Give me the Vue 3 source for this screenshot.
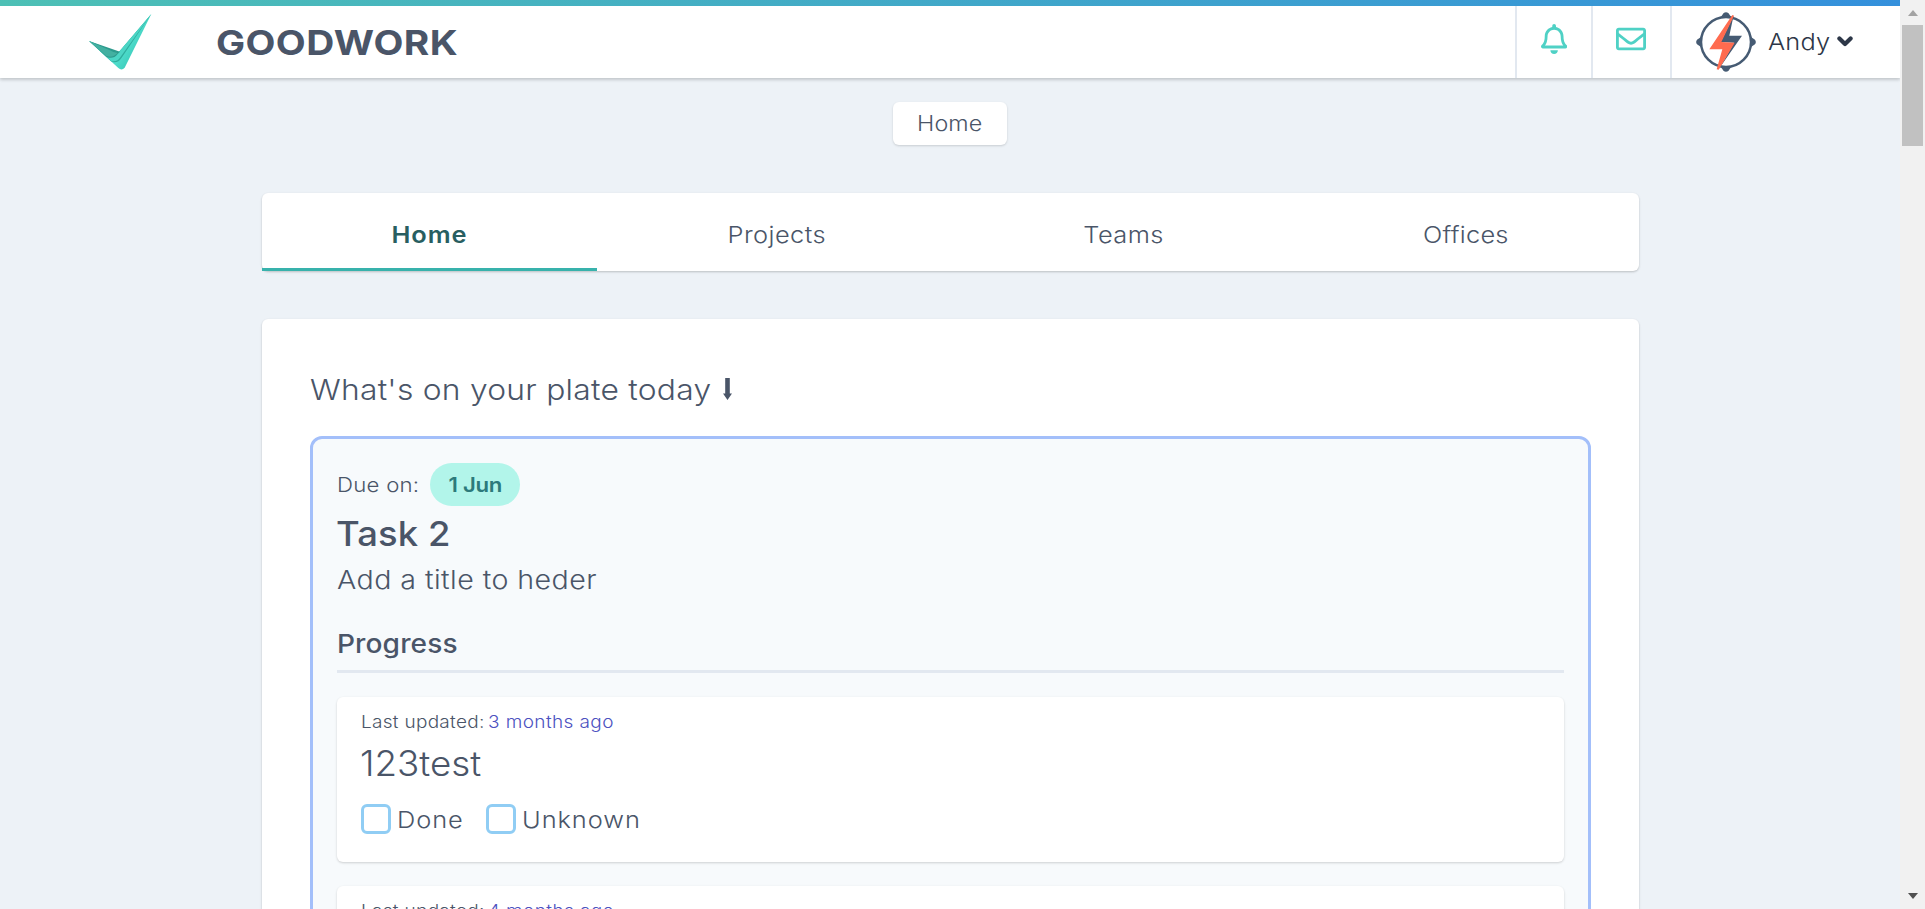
<script setup>
const tabs = [
  { label: 'Home', cls: 'tab-home' },
  { label: 'Projects', cls: 'tab-projects' },
  { label: 'Teams', cls: 'tab-teams' },
  { label: 'Offices', cls: 'tab-offices' },
]
const updates = [
  { age: '3 months ago', title: '123test', options: ['Done', 'Unknown'] },
  { age: '4 months ago' },
]
</script>

<template>
  <div class="screen">
    <div class="page">
      <header class="topbar">
        <svg class="logo" viewBox="0 0 240 225">
          <defs>
            <linearGradient id="arm" x1="0" y1="0.2" x2="1" y2="0.8">
              <stop offset="0.35" stop-color="#3fd3c2" />
              <stop offset="0.62" stop-color="#4fdccb" />
              <stop offset="1" stop-color="#25b9a9" />
            </linearGradient>
          </defs>
          <path d="M27 108 L115 189 Q125 198 134 188 L214 27 L116 143 Z" fill="url(#arm)" />
          <path d="M60 138 L93 169 Q112 178 125 158 L214 27 L114 144 Z" fill="#2fae9f" />
          <path d="M60 138 L92 167 Q110 174 122 155 L214 27 L114 144 Z" fill="#4cd5c5" />
          <path d="M27 108 L80 156 Q100 164 113 147 L120 140 Z" fill="#2d9a8d" />
          <path d="M27 108 L79 153 Q98 160 113 144 Q100 142 88 135 Z" fill="#43b0a1" />
        </svg>
        <h1 class="brand"><span class="t">GOODWORK</span></h1>
        <div class="tools">
          <button class="tool bell" aria-label="Notifications">
            <svg viewBox="0 0 448 512"><path d="M439.39 362.29c-19.32-20.76-55.47-51.99-55.47-154.29 0-77.7-54.48-139.9-127.94-155.16V32c0-17.67-14.32-32-31.98-32s-31.98 14.33-31.98 32v20.84C118.56 68.1 64.08 130.3 64.08 208c0 102.3-36.15 133.53-55.47 154.29-6 6.45-8.66 14.16-8.61 21.71.11 16.4 12.98 32 32.1 32h383.8c19.12 0 32-15.6 32.1-32 .05-7.55-2.61-15.27-8.61-21.71zM67.53 368c21.22-27.97 44.42-74.33 44.53-159.42 0-.2-.06-.38-.06-.58 0-61.86 50.14-112 112-112s112 50.14 112 112c0 .2-.06.38-.06.58.11 85.1 23.31 131.46 44.53 159.42H67.53zM224 512c35.32 0 63.97-28.65 63.97-64H160.03c0 35.35 28.65 64 63.97 64z" /></svg>
          </button>
          <button class="tool mail" aria-label="Messages">
            <svg viewBox="0 0 512 512"><path d="M464 64H48C21.49 64 0 85.49 0 112v288c0 26.51 21.49 48 48 48h416c26.51 0 48-21.49 48-48V112c0-26.51-21.49-48-48-48zm0 48v40.805c-22.422 18.259-58.168 46.651-134.587 106.49-16.841 13.247-50.201 45.072-73.413 44.701-23.208.375-56.579-31.459-73.413-44.701C106.18 199.465 70.425 171.067 48 152.805V112h416zM48 400V214.398c22.914 18.251 55.409 43.862 104.938 82.646 21.857 17.205 60.134 55.186 103.062 54.955 42.717.231 80.509-37.199 103.053-54.947 49.528-38.783 82.032-64.401 104.947-82.653V400H48z" /></svg>
          </button>
          <div class="account">
            <svg class="avatar" viewBox="18 20 180 180">
              <circle cx="108" cy="110" r="75" fill="#fff" stroke="#465b73" stroke-width="7.5" />
              <path d="M92 36 L101 23 Q108 18 115 23 L124 36 Z M92 184 L101 197 Q108 202 115 197 L124 184 Z M34 94 L21 103 Q16 110 21 117 L34 126 Z M182 94 L195 103 Q200 110 195 117 L182 126 Z" fill="#465b73" />
              <path d="M131 30 L118 91 L156 91 L86 192 L132 112 L92 110 Z" fill="#465b73" />
              <path d="M127 29 L132 31 L94 110 L134 112 L86 193 L80 192 L97 132 L58 132 Z" fill="#ff6b4f" />
            </svg>
            <span class="user t">Andy</span>
            <svg class="chev" viewBox="0 0 16 11"><path d="M2.4 2.4 L8 8 L13.6 2.4" /></svg>
          </div>
        </div>
      </header>

      <nav class="crumbs"><a class="crumb"><span class="t">Home</span></a></nav>

      <nav class="tabs">
        <a v-for="tab in tabs" :key="tab.label" class="tab" :class="tab.cls"><span class="t">{{ tab.label }}</span></a>
      </nav>

      <main class="card">
        <h2 class="heading">
          <span class="t heading-text">What's on your plate today</span>
          <svg class="down" viewBox="0 0 9 22"><path d="M2.2 0 H6.8 V15.5 H9 L4.5 22 L0 15.5 H2.2 Z" /></svg>
        </h2>
        <section class="task">
          <div class="due"><span class="due-label t">Due on:</span><span class="pill"><span class="t">1 Jun</span></span></div>
          <h3 class="task-title"><span class="t">Task 2</span></h3>
          <p class="task-desc"><span class="t">Add a title to heder</span></p>
          <h4 class="progress"><span class="t">Progress</span></h4>
          <article v-for="item in updates" :key="item.age" class="update">
            <p class="updated"><span class="t updated-label">Last updated:</span><span class="age t">{{ item.age }}</span></p>
            <p v-if="item.title" class="update-title"><span class="t">{{ item.title }}</span></p>
            <div v-if="item.options" class="options">
              <label v-for="option in item.options" :key="option" class="option"><i class="box"></i><span class="t">{{ option }}</span></label>
            </div>
          </article>
        </section>
      </main>
    </div>
    <div class="scrollbar">
      <i class="arrow up"></i>
      <i class="thumb"></i>
      <i class="arrow dn"></i>
    </div>
  </div>
</template>

<style>
html, body { overflow: hidden; background: #edf2f7; }
</style>

<style scoped>
* { box-sizing: border-box; margin: 0; }
.screen { display: flex; width: 1925px; height: 909px; overflow: hidden; font-family: Inter, "Open Sans", sans-serif; font-weight: 300; color: #4a5568; background: #edf2f7; }
/* Slightly extended letterforms for the interface face */
.t { display: inline-block; white-space: nowrap; transform: scaleX(1.1); transform-origin: left; }
.page { width: 1900px; height: 909px; overflow: hidden; }
.topbar { display: flex; height: 78px; align-items: flex-start; border-top: 6px solid; border-image: linear-gradient(to right, #4dc0b5, #3490dc) 1; background: #fff; box-shadow: 0 1px 4px rgba(0,0,0,.12), 0 2px 3px rgba(0,0,0,.1); }
.logo { width: 80px; height: 75px; margin: -1px 0 0 80px; flex: none; }
.brand { margin-left: 56px; font-size: 34.7px; font-weight: 700; line-height: 72px; letter-spacing: .35px; }
.brand .t { transform: scaleX(1.12); }
.tools { display: flex; margin-left: auto; height: 72px; }
.tool { border: 0; border-left: 2px solid #e2e8f0; background: none; padding: 0; height: 72px; }
.bell { width: 76px; padding-left: 24px; }
.mail { width: 79px; padding-left: 23px; }
.tool svg { display: block; fill: #4fd1c5; height: 30px; margin-bottom: 6px; }
.account { display: flex; width: 230px; border-left: 2px solid #e2e8f0; padding-left: 24px; color: #2d3748; }
.avatar { width: 60px; height: 60px; margin-top: 6px; }
.user { width: 63px; margin-left: 12px; font-size: 23.1px; line-height: 72px; letter-spacing: .2px; }
.chev { width: 16px; height: 11px; margin: 30px 0 0 6px; fill: none; stroke: #2d3748; stroke-width: 4.2; stroke-linejoin: round; stroke-linecap: round; }
.crumbs { display: flex; justify-content: center; padding-top: 24px; }
.crumb { width: 114px; height: 43px; border-radius: 6px; background: #fff; box-shadow: 0 1px 3px rgba(0,0,0,.1), 0 1px 2px rgba(0,0,0,.06); text-align: center; font-size: 21.2px; line-height: 43px; letter-spacing: .1px; }
.crumb .t, .tab .t, .pill .t { transform-origin: center; }
.tabs { display: flex; width: 1377px; height: 78px; margin: 48px 0 0 262px; border-radius: 6px; background: #fff; box-shadow: 0 1px 3px rgba(0,0,0,.1), 0 1px 2px rgba(0,0,0,.12); font-size: 23.1px; line-height: 84px; text-align: center; }
.tab { height: 78px; }
.tab-home { width: 335px; border-bottom: 3px solid #38b2ac; color: #285e61; font-weight: 600; letter-spacing: .78px; }
.tab-projects { width: 359px; letter-spacing: .4px; }
.tab-teams { width: 336px; letter-spacing: .4px; }
.tab-offices { width: 347px; letter-spacing: .2px; }
.card { width: 1377px; height: 700px; margin: 48px 0 0 262px; padding: 48px; border-radius: 6px; background: #fff; box-shadow: 0 1px 3px rgba(0,0,0,.1), 0 1px 2px rgba(0,0,0,.12); }
.heading { display: flex; font-size: 28.9px; font-weight: 300; line-height: 45px; letter-spacing: .23px; }
.heading-text { width: 401px; }
.down { width: 9px; height: 22px; margin: 11px 0 0 12px; fill: #4a5568; }
.task { width: 1281px; margin-top: 24px; padding: 24px; border: 3px solid #a3bffa; border-radius: 12px; background: #f7fafc; }
.due { display: flex; font-size: 20.2px; line-height: 43px; letter-spacing: .22px; }
.due-label { width: 81px; }
.pill { width: 90px; height: 43px; margin-left: 12px; border-radius: 22px; background: #b2f5ea; color: #2c7a7b; font-weight: 600; text-align: center; letter-spacing: -.3px; }
.task-title { margin-left: -1px; font-size: 34.7px; font-weight: 460; line-height: 54px; letter-spacing: .1px; }
.task-title .t { transform: scaleX(1.05); }
.task-desc { font-size: 26px; line-height: 40px; letter-spacing: .4px; }
.progress { height: 73px; padding-top: 24px; border-bottom: 3px solid #e2e8f0; font-size: 26px; font-weight: 460; line-height: 40px; letter-spacing: .1px; }
.progress .t { transform: scaleX(1.08); }
.update { height: 165px; margin-top: 24px; padding: 11px 24px; border-radius: 6px; background: #fff; box-shadow: 0 1px 3px rgba(0,0,0,.1), 0 1px 2px rgba(0,0,0,.08); }
.updated { display: flex; gap: 5px; font-size: 17.3px; line-height: 27px; letter-spacing: .26px; }
.updated-label { width: 121.5px; }
.age { color: #4c51bf; letter-spacing: .36px; }
.update-title { margin: 1px 0 0 -1px; font-size: 34.7px; line-height: 54px; }
.update-title .t { transform: scaleX(1.06); }
.options { display: flex; gap: 24px; margin-top: 14px; letter-spacing: .85px; }
.option { display: flex; gap: 6px; font-size: 23.1px; line-height: 32px; }
.option .t { min-width: 65px; }
.box { width: 30px; height: 30px; border: 3px solid #90cdf4; border-radius: 6px; }
.scrollbar { display: flex; flex-direction: column; align-items: center; width: 25px; height: 909px; background: #f1f1f1; }
.thumb { width: 21px; height: 121px; margin-top: 9px; background: #c1c1c1; }
.arrow { border: 5.5px solid transparent; }
.up { margin-top: 10px; border-top: 0; border-bottom: 6px solid #a3a3a3; }
.dn { margin-top: auto; margin-bottom: 10px; border-bottom: 0; border-top: 6px solid #505050; }
</style>
